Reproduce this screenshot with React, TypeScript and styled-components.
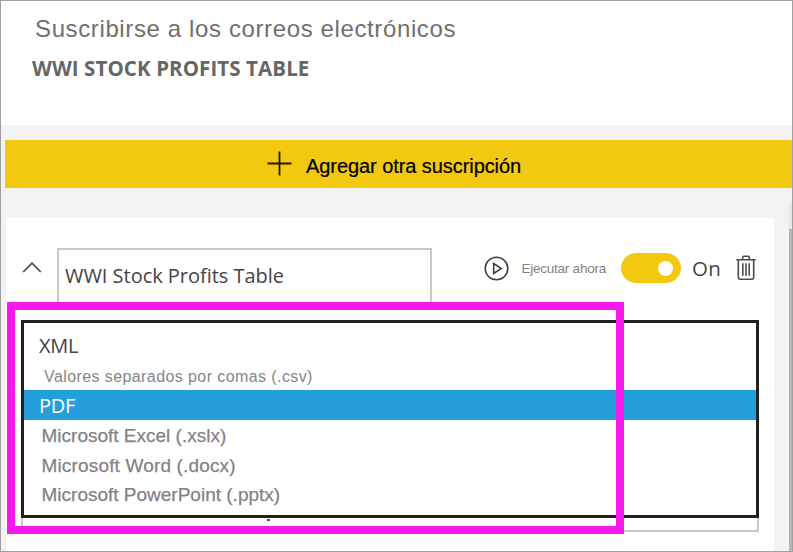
import React from "react";
import styled, { createGlobalStyle } from "styled-components";

const sans = `"Liberation Sans", Arial, sans-serif`;
const ui = `"Open Sans", "Noto Sans", sans-serif`;

const GlobalStyle = createGlobalStyle`
  *, *::before, *::after { box-sizing: border-box; }
  body { margin: 0; background: #fff; }
`;

const Frame = styled.main`
  width: 793px;
  height: 552px;
  display: flex;
  flex-direction: column;
  overflow: hidden;
  border: 1px solid #a0a0a0;
  background: #f3f3f3;
  white-space: nowrap;
`;

const Header = styled.header`
  flex: none;
  height: 124px;
  padding: 12px 0 0 31px;
  background: #fff;
`;

const Title = styled.h1`
  margin: 0;
  padding-left: 3px;
  font: 400 24px/32px ${sans};
  letter-spacing: 0.62px;
  color: #6f6f6f;
`;

const Subtitle = styled.h2`
  margin: 7px 0 0;
  font: 700 20.5px/32px ${ui};
  letter-spacing: 0.09px;
  color: #666;
`;

const AddButton = styled.button`
  flex: none;
  display: flex;
  align-items: center;
  height: 48px;
  margin: 15px 0 0 4px;
  padding: 4px 0 0 262px;
  gap: 14px;
  border: 0;
  background: #f2c811;
  color: #000;
  font: 400 20px/30px ${sans};
  letter-spacing: -0.07px;
  -webkit-text-stroke: 0.2px #000;

  svg { display: block; margin-top: -5px; }
`;

const Body = styled.div`
  flex: 1;
  display: flex;
  min-height: 0;
`;

const Card = styled.section`
  width: 768px;
  margin: 30px 15px 0 5px;
  background: #fff;
`;

const ScrollTrack = styled.div`
  width: 3px;
  margin-top: 15px;
  padding-top: 26px;
  background: #e6e6e6;
`;

const ScrollThumb = styled.div`
  height: 100%;
  background: #b5b5b5;
`;

const SubscriptionRow = styled.div`
  display: flex;
  height: 102px;
  padding: 30px 0 0 16px;
`;

const Collapse = styled.button`
  width: 20px;
  height: 40px;
  padding: 0;
  border: 0;
  background: none;

  svg { display: block; }
`;

const NameField = styled.div`
  width: 375px;
  height: 54px;
  margin-left: 15px;
  padding-left: 6px;
  border: 2px solid #c8c8c8;
  border-bottom: 0;
  font: 400 20px/52px ${ui};
  letter-spacing: -0.03px;
  color: #444;
`;

const Actions = styled.div`
  display: flex;
  align-items: center;
  height: 40px;
  margin-left: 52px;

  svg { display: block; flex: none; }
`;

const RunLabel = styled.span`
  width: 111px;
  padding: 1px 0 0 12.5px;
  font: 400 13.5px/21px ${sans};
  letter-spacing: -0.24px;
  color: #858080;
`;

const Toggle = styled.span`
  display: flex;
  justify-content: flex-end;
  align-items: center;
  width: 60px;
  height: 30px;
  margin-left: 1px;
  padding-right: 8px;
  border-radius: 15px;
  background: #f2c811;
`;

const Knob = styled.span`
  width: 15px;
  height: 15px;
  border-radius: 50%;
  background: #fff;
`;

const ToggleLabel = styled.span`
  width: 44px;
  margin-left: 11px;
  font: 400 20.5px/24px ${ui};
  letter-spacing: 0.2px;
  color: #444;
`;

const FormatSelect = styled.div`
  position: relative;
  width: 738px;
  height: 212px;
  margin-left: 15px;
  border: 2px solid #c8c8c8;
`;

const OptionList = styled.ul`
  position: absolute;
  inset: -2px -2px 12px -2px;
  margin: 0;
  padding: 7px 0 0;
  list-style: none;
  border: 3px solid #212121;
  background: #fff;
`;

const Option = styled.li<{ $selected?: boolean }>`
  height: 30px;
  padding-left: 15px;
  font: 400 20px/32px ${ui};
  letter-spacing: -0.3px;
  color: ${(p) => (p.$selected ? "#fff" : "#444")};
  background: ${(p) => (p.$selected ? "#259fdc" : "transparent")};
`;

const CsvOption = styled(Option)`
  padding-left: 20px;
  font: 400 16px/34px ${sans};
  letter-spacing: 0.41px;
  color: #858585;
`;

const OfficeOption = styled(Option)<{ $tracking?: number; $height?: number }>`
  height: ${(p) => p.$height ?? 30}px;
  padding-left: 17.5px;
  font: 400 19px/32px ${sans};
  letter-spacing: ${(p) => p.$tracking ?? 0}px;
  color: #858183;
  -webkit-text-stroke: 0.25px #858183;
`;

const TextRemnant = styled.span`
  position: absolute;
  left: 244px;
  bottom: 9px;
  width: 3px;
  height: 2px;
  background: #554f4f;
`;

const Highlight = styled.div`
  position: absolute;
  left: -16px;
  top: -20px;
  width: 617px;
  height: 232px;
  border: 8px solid #f519ee;
`;

const PlusIcon = () => (
  <svg width="25" height="25" viewBox="0 0 25 25" stroke="#211c08" strokeWidth="1.8" fill="none">
    <path d="M12.5 0.5v24M0.5 12.5h24" />
  </svg>
);

const ChevronIcon = () => (
  <svg width="20" height="40" viewBox="0 0 20 40" stroke="#444" strokeWidth="1.6" fill="none">
    <path d="M1.2 24 10 15.2l8.8 8.8" />
  </svg>
);

const PlayIcon = () => (
  <svg width="25" height="25" viewBox="0 0 25 25" stroke="#3d4043" strokeWidth="1.6" fill="none">
    <circle cx="12.5" cy="12.5" r="11.3" />
    <path d="M9.7 7.5v10l7.6-5z" />
  </svg>
);

const TrashIcon = () => (
  <svg width="20" height="27" viewBox="0 0 20 27" stroke="#4a4a4a" strokeWidth="1.6" fill="none">
    <path d="M0.300 4.800h19.400M6.700 4.500V2.200q0-1 1-1h4.600q1 0 1 1v2.300M2.300 5v17.600q0 1.600 1.600 1.600h12.200q1.600 0 1.600-1.600V5M6.800 8.200v12.600M10 8.200v12.600M13.200 8.200v12.600" />
  </svg>
);

export default function App() {
  return (
    <>
      <GlobalStyle />
      <Frame>
        <Header>
          <Title>Suscribirse a los correos electrónicos</Title>
          <Subtitle>WWI STOCK PROFITS TABLE</Subtitle>
        </Header>
        <AddButton>
          <PlusIcon />
          <span>Agregar otra suscripción</span>
        </AddButton>
        <Body>
          <Card>
            <SubscriptionRow>
              <Collapse aria-label="Contraer">
                <ChevronIcon />
              </Collapse>
              <NameField>WWI Stock Profits Table</NameField>
              <Actions>
                <PlayIcon />
                <RunLabel>Ejecutar ahora</RunLabel>
                <Toggle role="switch" aria-checked="true">
                  <Knob />
                </Toggle>
                <ToggleLabel>On</ToggleLabel>
                <TrashIcon />
              </Actions>
            </SubscriptionRow>
            <FormatSelect>
              <TextRemnant />
              <OptionList>
                <Option>XML</Option>
                <CsvOption>Valores separados por comas (.csv)</CsvOption>
                <Option $selected>PDF</Option>
                <OfficeOption>Microsoft Excel (.xslx)</OfficeOption>
                <OfficeOption $tracking={0.16} $height={29}>Microsoft Word (.docx)</OfficeOption>
                <OfficeOption>Microsoft PowerPoint (.pptx)</OfficeOption>
              </OptionList>
              <Highlight />
            </FormatSelect>
          </Card>
          <ScrollTrack>
            <ScrollThumb />
          </ScrollTrack>
        </Body>
      </Frame>
    </>
  );
}
